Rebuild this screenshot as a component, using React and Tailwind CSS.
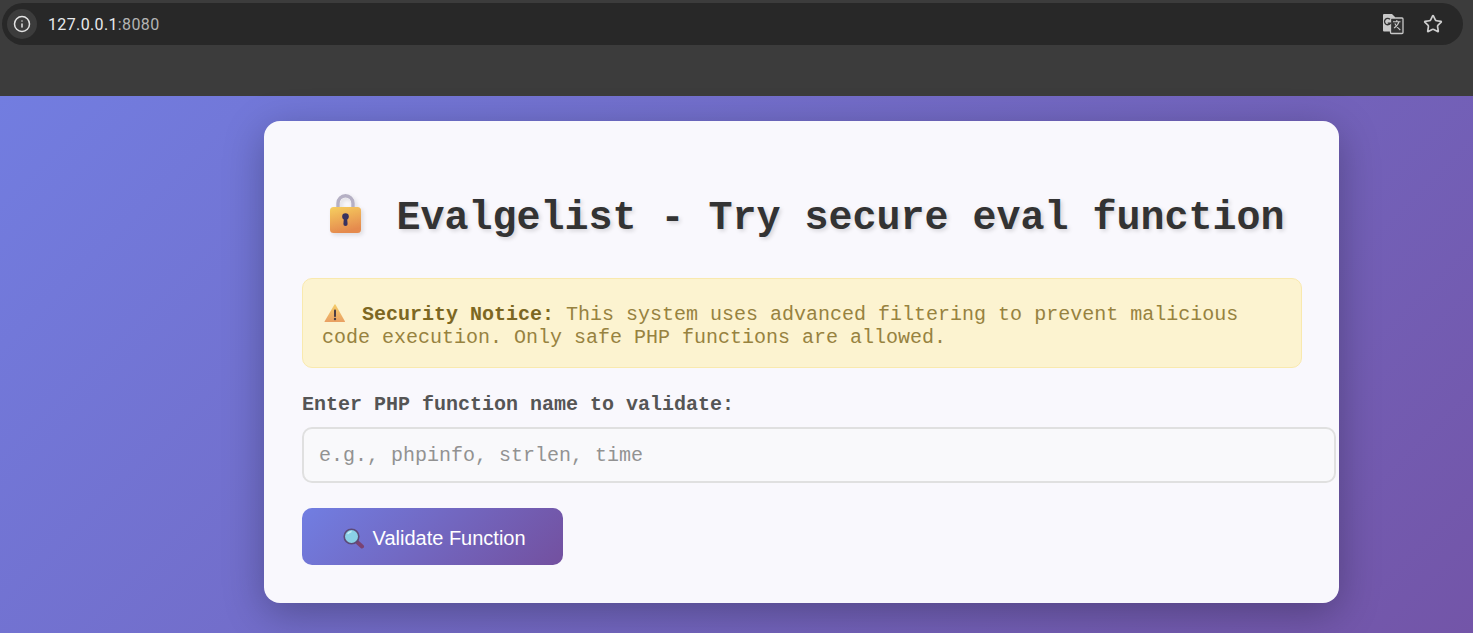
import React from "react";
import { Info, Star } from "lucide-react";

const Lock = () => (
  <svg viewBox="0 0 54 46" className="inline-block w-[54px] h-[46px] align-[-10px] overflow-visible">
    <defs>
      <linearGradient id="lockBody" x1="0" y1="0" x2="0.3" y2="1">
        <stop offset="0" stopColor="#f6cf5f" />
        <stop offset="1" stopColor="#e58a4e" />
      </linearGradient>
      <filter id="lockShadow" x="-30%" y="-30%" width="160%" height="160%">
        <feDropShadow dx="2" dy="2" stdDeviation="2" floodColor="#000" floodOpacity="0.12" />
      </filter>
    </defs>
    <g filter="url(#lockShadow)" transform="translate(0 3)">
      <path d="M20 17V7.200a7.500 7.500 0 0 1 15 0V17" fill="none" stroke="#b5b0c4" strokeWidth="3.400" />
      <rect x="12" y="11" width="31" height="26" rx="3.500" fill="url(#lockBody)" />
      <circle cx="27.500" cy="20.500" r="3.300" fill="#39305f" />
      <path d="M26 21h3l.6 7a2 2 0 0 1-4.200 0z" fill="#39305f" />
    </g>
  </svg>
);

const Warn = () => (
  <svg viewBox="0 0 28 20" className="inline-block w-[28px] h-[20px] align-[-3px]">
    <defs>
      <linearGradient id="warnBody" x1="0" y1="0" x2="0" y2="1">
        <stop offset="0" stopColor="#f5cd6a" />
        <stop offset="1" stopColor="#e9a063" />
      </linearGradient>
    </defs>
    <path d="M12.500 1.500 Q13 1 13.500 1.500 L23 18.500 Q23 19 22.500 19 H3 Q2.500 19 2.500 18.500Z" fill="url(#warnBody)" />
    <rect x="12" y="6.500" width="2" height="7.500" rx="0.800" fill="#4a3d45" />
    <circle cx="13" cy="16" r="1.200" fill="#4a3d45" />
  </svg>
);

const Magnifier = () => (
  <svg viewBox="0 0 25 21" className="inline-block w-[25px] h-[21px] align-[-4px]">
    <path d="M14.500 13.500 L20 18.500" stroke="#7a4272" strokeWidth="4" strokeLinecap="round" />
    <circle cx="9.500" cy="8.500" r="7.300" fill="#8ad0e6" stroke="#5c4a78" strokeWidth="1.600" />
    <path d="M6 5.500a5 5 0 0 1 3-1.800" fill="none" stroke="#c9eef7" strokeWidth="1.400" strokeLinecap="round" />
  </svg>
);

const Translate = () => (
  <svg viewBox="0 0 22 22" className="w-[22px] h-[22px]">
    <path d="M1 2a1 1 0 0 1 1-1h8l3 3v14.500h-11a1 1 0 0 1-1-1z" fill="#c8c8c8" />
    <rect x="8.500" y="5" width="12.500" height="15.500" rx="1" fill="#333333" stroke="#c8c8c8" strokeWidth="1.300" />
    <path d="M8 6.300a3.200 3.200 0 1 0 .5 3.800h-2.800" fill="none" stroke="#333333" strokeWidth="1.300" />
    <path d="M11 8.700h7.500M14.800 7v1.700M17 8.700c-.8 3-2.600 5-5 6.300M12.800 10.500c1 2 3 4.500 5.500 6.500" fill="none" stroke="#c8c8c8" strokeWidth="1.100" />
  </svg>
);

export default function App() {
  return (
    <div className="min-h-[633px] bg-[#3c3c3c] font-['Liberation_Mono',monospace]">
      <div className="h-[96px] pt-[3px] pl-[2px] pr-[10px]">
        <div className="h-[42px] rounded-full bg-[#282828] flex items-center pl-[5px] pr-[20px] text-[#c7c7c7]">
          <div className="w-[30px] h-[30px] rounded-full bg-[#3c3c3c] flex items-center justify-center">
            <Info size={18} strokeWidth={2} className="text-[#e3e3e3]" />
          </div>
          <div className="ml-[11px] mt-[1px] font-['Roboto',sans-serif] text-[16px] tracking-[0.36px]">
            <span className="text-[#e8eaed]">127.0.0.1</span>
            <span className="text-[#b4b4b4]">:8080</span>
          </div>
          <div className="ml-auto flex items-center gap-[19px]">
            <Translate />
            <Star size={20} strokeWidth={2} className="text-[#cfcfcf]" />
          </div>
        </div>
      </div>
      <div className="h-[537px] pt-[25px] pl-[264px] bg-[linear-gradient(135deg,#727de0_0%,#7355a8_100%)]">
        <div className="w-[1075px] h-[482px] pt-[38px] px-[38px] rounded-[16px] bg-[#f9f8fd] shadow-[0_10px_40px_rgba(0,0,0,0.28)]">
          <h1 className="mt-[34px] h-[46px] text-[40px] leading-[46px] font-bold text-[#333333] text-center [text-shadow:2px_2px_4px_rgba(0,0,0,0.15)]">
            <Lock /> Evalgelist - Try secure eval function
          </h1>
          <div className="mt-[39px] w-[1000px] h-[90px] rounded-[10px] border border-[#f9e9ae] bg-[#fcf3d0] pt-[24px] pl-[19px] pr-[20px] text-[20px] leading-[23px] text-[#97823f]">
            <Warn /> <strong className="font-bold text-[#7d6722]">Security Notice:</strong> This system uses advanced filtering to prevent malicious code execution. Only safe PHP functions are allowed.
          </div>
          <label className="block mt-[25px] text-[20px] leading-[23px] font-bold text-[#555555]">
            Enter PHP function name to validate:
          </label>
          <input
            placeholder="e.g., phpinfo, strlen, time"
            className="block mt-[11px] w-[1034px] h-[56px] rounded-[10px] border-2 border-[#e0e0e0] bg-[#f9f9fb] px-[15px] text-[20px] font-['Liberation_Mono',monospace] placeholder:text-[#929292] outline-none"
          />
          <button className="mt-[25px] h-[57px] w-[261px] rounded-[10px] pl-[40px] pt-[3px] text-left text-white text-[20px] font-['Liberation_Sans',sans-serif] bg-[linear-gradient(135deg,#717ee2_0%,#73509f_100%)]">
            <Magnifier /> Validate Function
          </button>
        </div>
      </div>
    </div>
  );
}
